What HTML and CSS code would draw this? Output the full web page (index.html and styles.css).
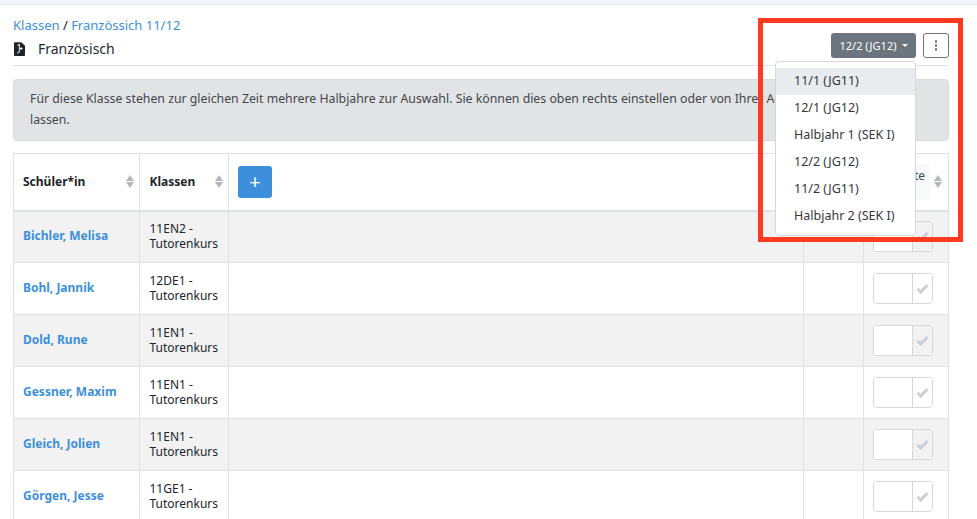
FILE: index.html
```html
<!DOCTYPE html>
<html lang="de">
<head>
<meta charset="utf-8">
<title>Französisch</title>
<link rel="stylesheet" href="styles.css">
</head>
<body>
<div class="topbar"></div>
<main class="page">
  <div class="head">
    <div class="head-left">
      <nav class="crumbs"><a href="#">Klassen</a> / <a href="#">Französsich 11/12</a></nav>
      <h1 class="title">
        <svg class="file-icon" viewBox="0 0 12 15" width="11" height="14"><path d="M1 0h7l4 4v10a1 1 0 0 1-1 1H1a1 1 0 0 1-1-1V1a1 1 0 0 1 1-1z" fill="#1f2326"/><path d="M5.8 2v9M3.6 3.6l2.2-1.2M5.8 7h3.6M7.8 5.4v3.2M3.4 12l2.4-1.2" stroke="#fff" stroke-width="1" fill="none"/></svg>
        <span>Französisch</span>
      </h1>
    </div>
    <div class="head-right">
      <button class="btn-term">12/2 (JG12)<span class="caret"></span></button>
      <button class="btn-more"><span class="dot"></span><span class="dot"></span><span class="dot"></span></button>
    </div>
  </div>
  <div class="alert">Für diese Klasse stehen zur gleichen Zeit mehrere Halbjahre zur Auswahl. Sie können dies oben rechts einstellen oder von Ihrer Administration ändern lassen.</div>
  <table class="grid">
    <colgroup><col class="c1"><col class="c2"><col class="c3"><col class="c4"><col class="c5"></colgroup>
    <thead>
      <tr>
        <th><div class="th-in">Schüler*in<span class="sort"></span></div></th>
        <th><div class="th-in">Klassen<span class="sort"></span></div></th>
        <th><button class="btn-add">+</button></th>
        <th></th>
        <th class="th-note"><div class="note-wrap"><div class="note">Note</div><span class="sort"></span></div></th>
      </tr>
    </thead>
    <tbody>
      <tr><td><a href="#">Bichler, Melisa</a></td><td>11EN2 -<br>Tutorenkurs</td><td></td><td></td><td><div class="check"><span class="field"></span><span class="tick"><svg viewBox="0 0 14 12" width="13" height="11"><path d="M1.5 6.5 5 10l7.5-8" class="tick-path"/></svg></span></div></td></tr>
      <tr><td><a href="#">Bohl, Jannik</a></td><td>12DE1 -<br>Tutorenkurs</td><td></td><td></td><td><div class="check"><span class="field"></span><span class="tick"><svg viewBox="0 0 14 12" width="13" height="11"><path d="M1.5 6.5 5 10l7.5-8" class="tick-path"/></svg></span></div></td></tr>
      <tr><td><a href="#">Dold, Rune</a></td><td>11EN1 -<br>Tutorenkurs</td><td></td><td></td><td><div class="check"><span class="field"></span><span class="tick"><svg viewBox="0 0 14 12" width="13" height="11"><path d="M1.5 6.5 5 10l7.5-8" class="tick-path"/></svg></span></div></td></tr>
      <tr><td><a href="#">Gessner, Maxim</a></td><td>11EN1 -<br>Tutorenkurs</td><td></td><td></td><td><div class="check"><span class="field"></span><span class="tick"><svg viewBox="0 0 14 12" width="13" height="11"><path d="M1.5 6.5 5 10l7.5-8" class="tick-path"/></svg></span></div></td></tr>
      <tr><td><a href="#">Gleich, Jolien</a></td><td>11EN1 -<br>Tutorenkurs</td><td></td><td></td><td><div class="check"><span class="field"></span><span class="tick"><svg viewBox="0 0 14 12" width="13" height="11"><path d="M1.5 6.5 5 10l7.5-8" class="tick-path"/></svg></span></div></td></tr>
      <tr><td><a href="#">Görgen, Jesse</a></td><td>11GE1 -<br>Tutorenkurs</td><td></td><td></td><td><div class="check"><span class="field"></span><span class="tick"><svg viewBox="0 0 14 12" width="13" height="11"><path d="M1.5 6.5 5 10l7.5-8" class="tick-path"/></svg></span></div></td></tr>
    </tbody>
  </table>
</main>
<ul class="menu">
  <li class="active">11/1 (JG11)</li>
  <li>12/1 (JG12)</li>
  <li>Halbjahr 1 (SEK I)</li>
  <li>12/2 (JG12)</li>
  <li>11/2 (JG11)</li>
  <li>Halbjahr 2 (SEK I)</li>
</ul>
<div class="frame"></div>
</body>
</html>
```
FILE: styles.css
```css
* { box-sizing: border-box; }
html, body { height: 519px; overflow: hidden; }
body { margin: 0; background: #fff; color: #212529; font-family: "Noto Sans", "Open Sans", sans-serif; font-size: 12.5px; line-height: 17px; position: relative; }
a { color: #3d8fdc; text-decoration: none; }
.topbar { height: 5px; background: #f1f3f9; border-bottom: 1px solid #e8ebf3; }
.page { padding: 0 28px 0 13px; }
.head { display: flex; justify-content: space-between; height: 61px; padding-top: 12px; border-bottom: 1px solid #dee2e6; }
.crumbs { font-size: 13px; line-height: 17px; }
.title { margin: 5px 0 0 1px; display: flex; align-items: center; gap: 13px; font-size: 14px; font-weight: 400; line-height: 19px; color: #26292c; }
.head-right { display: flex; gap: 7px; padding-top: 16px; height: 41px; }
.btn-term { width: 85px; height: 25px; border: 0; border-radius: 3px; background: #6c757d; color: #fff; font: 11px/25px "Noto Sans", sans-serif; padding: 0; display: flex; align-items: center; justify-content: center; gap: 5px; }
.caret { width: 0; height: 0; border: 3px solid transparent; border-top-color: #fff; border-bottom: 0; }
.btn-more { width: 26px; height: 25px; background: #fff; border: 1px solid #6c757d; border-radius: 3px; padding: 0; display: flex; flex-direction: column; align-items: center; justify-content: center; gap: 1.5px; }
.dot { width: 2.5px; height: 2.5px; border-radius: 50%; background: #6c757d; }
.alert { margin-top: 13px; height: 62px; background: #e2e3e5; border: 1px solid #d9dadd; border-radius: 4px; padding: 8px 16px; color: #41464b; font-size: 12.3px; line-height: 21px; }
.grid { margin-top: 12px; width: 935px; table-layout: fixed; border-collapse: collapse; border: 1px solid #dee2e6; }
.c1 { width: 126px; } .c2 { width: 89px; } .c3 { width: 575px; } .c4 { width: 60px; } .c5 { width: 85px; }
th, td { border: 1px solid #dee2e6; padding: 0 5px 0 9px; vertical-align: middle; text-align: left; }
th:nth-child(2), td:nth-child(2) { padding-left: 9.5px; }
td:nth-child(-n+2) { padding-bottom: 2px; }
thead tr { height: 57px; }
thead th { border-bottom-width: 2px; font-weight: 700; font-size: 12px; color: #212529; }
.th-in { display: flex; justify-content: space-between; align-items: center; }
tbody tr { height: 52px; }
tbody tr:nth-child(odd) { background: #f2f2f2; }
td { font-size: 12px; line-height: 15px; }
td a { font-weight: 700; font-size: 12px; }
.sort { flex: none; width: 8px; height: 13px; position: relative; }
.sort::before, .sort::after { content: ""; position: absolute; left: 0; border: 4px solid transparent; }
.sort::before { top: 0; border-top: 0; border-bottom: 6px solid #b4b8bc; }
.sort::after { bottom: 0; border-bottom: 0; border-top: 6px solid #b4b8bc; }
.btn-add { width: 34px; height: 32px; border: 0; border-radius: 3px; background: #3d8fdc; color: #fff; font: 400 20px/30px "Noto Sans", sans-serif; padding: 0; }
.th-note { padding: 0 6px 0 0; }
.note-wrap { display: flex; align-items: center; justify-content: flex-end; gap: 4px; }
.note { width: 66px; height: 36px; background: #f8f9fa; border-radius: 3px; text-align: right; padding: 3px 5px 0 0; font-weight: 400; color: #41464b; }
.check { display: flex; width: 60px; height: 31px; border: 1px solid #d4d8dd; border-radius: 4px; background: #fff; }
.field { flex: 1; background: #fff; border-radius: 3px 0 0 3px; }
.tick { width: 20px; border-left: 1px solid #d4d8dd; display: flex; align-items: center; justify-content: center; background: #fff; border-radius: 0 3px 3px 0; }
tbody tr:nth-child(odd) .tick { background: #f2f2f2; }
.tick-path { fill: none; stroke: #ccd2d8; stroke-width: 3.4; }
.menu { position: absolute; left: 775px; top: 61px; width: 141px; height: 175px; margin: 0; padding: 6px 0; list-style: none; background: #fff; border: 1px solid #d5d7da; border-radius: 4px; font-size: 12.5px; color: #33373b; }
.menu li { height: 27px; line-height: 26px; padding-left: 18px; }
.menu .active { background: #e9ecef; }
.frame { position: absolute; left: 758px; top: 18px; width: 205px; height: 224px; border: 5px solid #ff3b1f; pointer-events: none; }
```
